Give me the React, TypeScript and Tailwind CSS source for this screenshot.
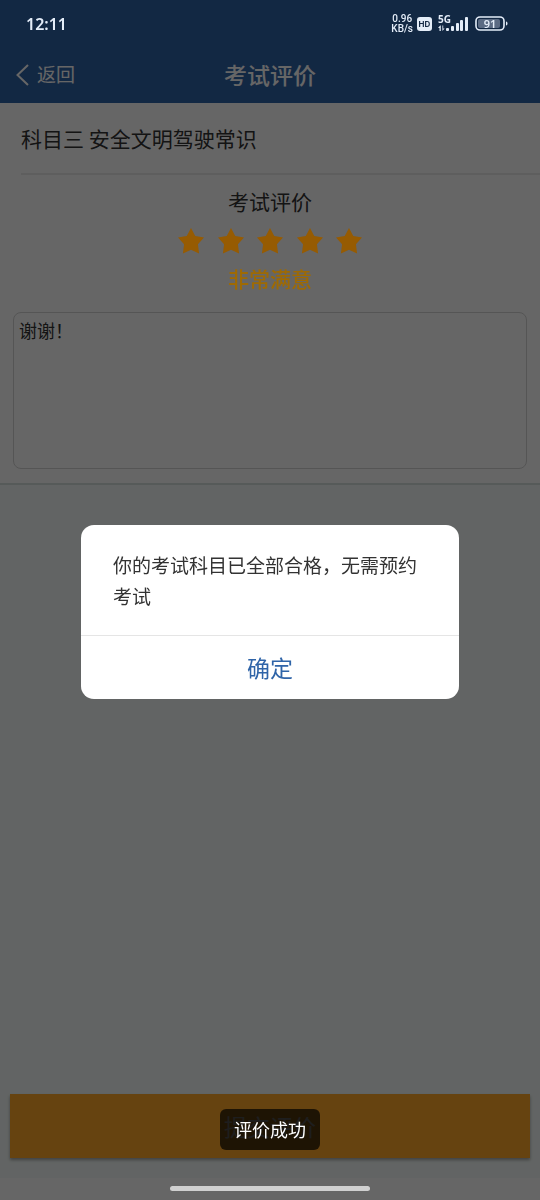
import { useState } from 'react';

const stars = [1, 2, 3, 4, 5];

function StatusBar() {
  return (
    <div className="fixed inset-x-0 top-0 z-20 flex h-12 items-center justify-between pl-[26px] pr-8 text-[#e4edf8]">
      <span className="font-['Noto_Sans'] text-[16px] font-semibold">12:11</span>
      <div className="flex items-center gap-1">
        <div className="text-center font-['Roboto'] text-[10px] font-medium leading-[10px]">
          <div>0.96</div>
          <div>KB/s</div>
        </div>
        <span className="flex h-[14px] w-[15px] items-center justify-center rounded-[3px] bg-[#e4edf8] font-['Inter'] text-[8px] font-bold text-[#132843]">
          HD
        </span>
        <svg className="ml-[2px] h-[18px] w-[30px] overflow-visible" viewBox="0 0 30 18" fill="currentColor">
          <text x="0" y="8" fontSize="10" fontWeight="700" fontFamily="Noto Sans">5G</text>
          <path d="M2.200 10.500 0 13h1.500v3h1.300v-5.500zM4.400 10.500v5.500l2.200-2.500H5.200v-3z" />
          <rect x="8" y="13" width="3" height="3" rx="1" />
          <rect x="13" y="11" width="3" height="5" rx="1" />
          <rect x="18" y="8" width="3" height="8" rx="1" />
          <rect x="22" y="5" width="3" height="11" rx="1" />
          <rect x="27" y="2" width="3" height="14" rx="1" />
        </svg>
        <svg className="ml-[3px] h-4 w-[33px]" viewBox="0 0 33 16" fill="none">
          <rect x="1" y="1" width="28" height="13" rx="4" stroke="currentColor" strokeWidth="1.6" />
          <rect x="3" y="3" width="22" height="9" rx="2" fill="#5b6b83" />
          <path d="M31 5.500c1 .3 1.500 1 1.500 2s-.5 1.700-1.500 2z" fill="currentColor" />
          <text x="15" y="11.500" textAnchor="middle" fontSize="11" fontWeight="600" fontFamily="Noto Sans" fill="currentColor">91</text>
        </svg>
      </div>
    </div>
  );
}

export default function App() {
  const [comment, setComment] = useState('谢谢！');
  const [rating, setRating] = useState(5);
  const [open, setOpen] = useState(true);

  return (
    <div className="flex min-h-screen flex-col bg-[#f5fbf9] font-['Noto_Sans_CJK_SC',sans-serif] text-[#333]">
      <StatusBar />

      <header className="bg-[#2f64a8] pt-12 text-white">
        <div className="grid h-[55px] grid-cols-3 items-center pb-[2px]">
          <button className="flex items-center gap-2 pl-4 text-[19px]">
            <svg className="h-[22px] w-[13px]" viewBox="0 0 13 22" fill="none" stroke="currentColor" strokeWidth="2">
              <path d="M12 1 1.500 11 12 21" />
            </svg>
            返回
          </button>
          <h1 className="text-center text-[23px] font-medium">考试评价</h1>
        </div>
      </header>

      <main className="border-b-2 border-[#d8e0de] bg-white">
        <h2 className="ml-[21px] flex h-[72px] items-center border-b-2 border-[#ececec] pt-[2px] text-[21px]">
          科目三 安全文明驾驶常识
        </h2>

        <div className="flex flex-col items-center pt-[10px]">
          <p className="text-[21px] leading-8">考试评价</p>
          <div className="relative z-20 flex w-[184px] justify-between pb-[10px] pt-[11px]">
            {stars.map((n) => (
              <button key={n} aria-label={`${n}星`} onClick={() => setRating(n)}>
                <svg
                  className={n <= rating ? 'h-[26px] w-[26px] text-[#965b02]' : 'h-[26px] w-[26px] text-[#555]'}
                  viewBox="0 0 27 27"
                  fill="currentColor"
                >
                  <path d="M13.500 0 17.900 8.300 27 9.900 20.700 16.900 21.900 26.500 13.500 22.500 5.100 26.500 6.300 16.900 0 9.900 9.100 8.300z" />
                </svg>
              </button>
            ))}
          </div>
          <p className="relative z-20 text-[21px] font-medium leading-7 text-[#9e6a04]">非常满意</p>
        </div>

        <div className="px-[13px] pb-[14px] pt-5">
          <textarea
            aria-label="评价内容"
            className="block h-[157px] w-full resize-none rounded-lg border border-[#d4d4d4] px-[5px] py-1 text-[18px] leading-[26px] outline-none"
            value={comment}
            onChange={(e) => setComment(e.target.value)}
          />
        </div>
      </main>

      <div className="mt-auto px-[10px] pb-5">
        <button className="h-16 w-full bg-[#ffa728] text-[23px] text-white shadow-[0_2px_3px_rgba(0,0,0,0.35)]">
          提交评价
        </button>
      </div>
      <div className="h-[22px] bg-white" />

      {open && (
        <div className="fixed inset-0 z-10 flex items-center justify-center bg-black/60">
          <div role="dialog" aria-modal="true" className="mt-6 w-[70%] overflow-hidden rounded-[13px] bg-white">
            <p className="px-8 pb-6 pt-6 text-[19px] leading-[31px]">
              你的考试科目已全部合格，无需预约考试
            </p>
            <button
              className="block h-16 w-full border-t border-[#e5e5e5] text-[23px] text-[#2f64a8]"
              onClick={() => setOpen(false)}
            >
              确定
            </button>
          </div>
        </div>
      )}

      {/* toast */}
      <div className="fixed inset-x-0 bottom-[50px] z-30 flex justify-center">
        <div role="status" className="rounded-md bg-black/70 px-[14px] py-[7px] text-[18px] leading-[27px] text-white">
          评价成功
        </div>
      </div>

      <div className="fixed inset-x-0 bottom-[9px] z-30 flex justify-center">
        <div className="h-[5px] w-[200px] rounded-full bg-[#d0d0d0]" />
      </div>
    </div>
  );
}
